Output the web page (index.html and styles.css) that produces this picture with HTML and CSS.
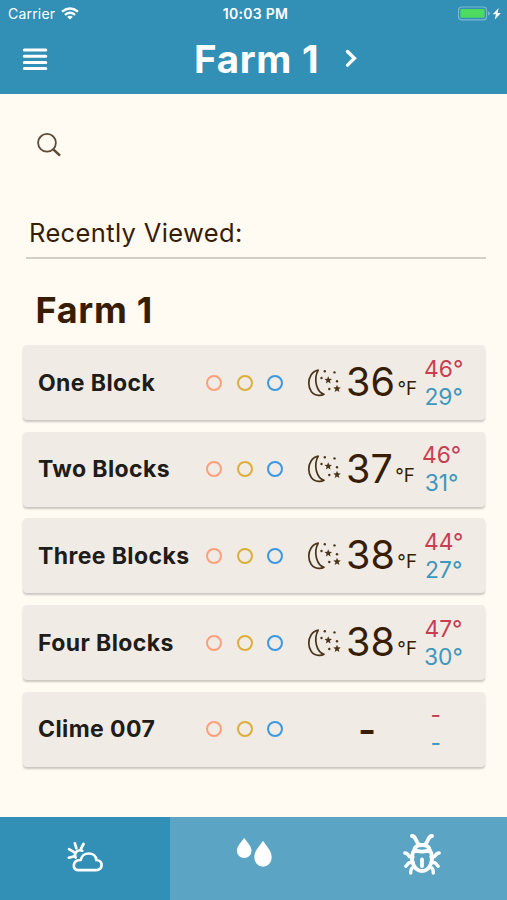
FILE: index.html
```html
<!DOCTYPE html>
<html lang="en">
<head>
<meta charset="utf-8">
<title>Farm 1</title>
<link rel="stylesheet" href="styles.css">
</head>
<body>
<svg class="defs" aria-hidden="true">
  <symbol id="night" viewBox="0 0 34 28">
    <path d="M11.200 1.200C-1.500 3.500-1.300 25.600 11.500 26.300c2.400.2 4.200-.3 5.500-1.100C9.800 23.200 6 10.500 11.200 1.200z" fill="none" stroke="#4a351b" stroke-width="1.700" stroke-linejoin="round"/>
    <g fill="#4a351b">
      <circle cx="17.800" cy="2.200" r="1.200"/><circle cx="27.500" cy="3.400" r="1.200"/><circle cx="14.500" cy="9" r="1.200"/><circle cx="30" cy="12.300" r="1.200"/><circle cx="22.300" cy="20" r="1.200"/>
      <path d="M21.200 7.200l1.100 2.600 2.700.2-2.100 1.800.7 2.700-2.400-1.500-2.300 1.500.7-2.700-2.100-1.800 2.700-.2z"/>
      <path d="M30 15.700l1.100 2.600 2.700.2-2.100 1.800.7 2.700-2.400-1.500-2.300 1.500.7-2.700-2.100-1.800 2.700-.2z"/>
    </g>
  </symbol>
</svg>
<header class="top">
  <div class="status">
    <div class="carrier">Carrier
      <svg width="18" height="13" viewBox="0 0 18 13" fill="none" stroke="#fff" stroke-width="2.300"><path d="M1 4.700q8-6.400 16 0M3.900 7.800q5.100-4 10.200 0"/><path d="M9 12.600L6.200 9.900q2.800-2.200 5.600 0z" fill="#fff" stroke="none"/></svg>
    </div>
    <div class="clock">10:03 PM</div>
    <svg class="battery" width="44" height="16" viewBox="0 0 44 16"><rect x="0.500" y="1" width="28" height="12.800" rx="3" fill="none" stroke="#7fb8d2" stroke-width="1.200"/><rect x="2.400" y="3" width="24.200" height="8.800" rx="1" fill="#4fdb60"/><path d="M30 5.500v4q2-.5 2-2t-2-2z" fill="#7fb8d2"/><path d="M40.700 2l-6 6.200h3.200l-1 5.200 6-6.500h-3.300z" fill="#fff"/></svg>
  </div>
  <div class="bar">
    <svg class="menu" width="26" height="24" viewBox="0 0 26 24" stroke="#fff" stroke-width="3" stroke-linecap="round"><path d="M2.300 3h21.500M2.300 9.200h21.500M2.300 15.400h21.500M2.300 21.500h21.500"/></svg>
    <h1>Farm 1</h1>
    <svg class="next" width="14" height="20" viewBox="0 0 14 20" fill="none" stroke="#fff" stroke-width="3.400" stroke-linecap="round" stroke-linejoin="miter"><path d="M3.500 2.500l6.900 6.800-6.900 6.800"/></svg>
  </div>
</header>
<main>
  <svg class="search" width="26" height="26" viewBox="0 0 26 26" fill="none" stroke="#5f4b35"><circle cx="11" cy="10.800" r="8.900" stroke-width="1.800"/><path d="M17.300 17.300l6.700 6.400" stroke-width="2.500"/></svg>
  <div class="recent">Recently Viewed:</div>
  <h2>Farm 1</h2>
  <section class="cards">
    <article class="card"><b class="name">One Block</b><div class="rings"><i></i><i></i><i></i></div><svg class="night"><use href="#night"/></svg><div class="reading"><div class="temp">36<small>°F</small></div><div class="range"><span>46°</span><span>29°</span></div></div></article>
    <article class="card"><b class="name">Two Blocks</b><div class="rings"><i></i><i></i><i></i></div><svg class="night"><use href="#night"/></svg><div class="reading"><div class="temp">37<small>°F</small></div><div class="range"><span>46°</span><span>31°</span></div></div></article>
    <article class="card"><b class="name">Three Blocks</b><div class="rings"><i></i><i></i><i></i></div><svg class="night"><use href="#night"/></svg><div class="reading"><div class="temp">38<small>°F</small></div><div class="range"><span>44°</span><span>27°</span></div></div></article>
    <article class="card"><b class="name">Four Blocks</b><div class="rings"><i></i><i></i><i></i></div><svg class="night"><use href="#night"/></svg><div class="reading"><div class="temp">38<small>°F</small></div><div class="range"><span>47°</span><span>30°</span></div></div></article>
    <article class="card"><b class="name">Clime 007</b><div class="rings"><i></i><i></i><i></i></div><div class="reading empty"><div class="temp">-</div><div class="range"><span>-</span><span>-</span></div></div></article>
  </section>
</main>
<nav>
  <div class="tab active"><svg width="38" height="32" viewBox="0 0 38 32" fill="none" stroke="#fff" stroke-width="2.700" stroke-linecap="round" stroke-linejoin="round"><path d="M12 29.200H30c7.500-.3 7.300-9.800.4-10.200C29.500 10.300 16.300 10.300 14.700 19c-8.200-.3-9 9.800-2.700 10.200zM9.600 16.500C7.500 12 11.500 8 16.200 9.700M8.900 2.400l1.400 4.800M17.500 3l-2.400 4.500M3 8.200l4.500 2.600M2.800 16.700l4.700-1.200"/></svg></div>
  <div class="tab"><svg class="drops" width="36" height="32" viewBox="0 0 36 32" fill="#fff"><path d="M8.200.8c2 3.600 7.300 8 7.300 13a7.300 7.300 0 0 1-14.600 0C.9 8.800 6.200 4.400 8.200.8zM27 3.800c2.700 4.700 8.700 9.700 8.700 16.400a8.700 9.500 0 0 1-17.400 0c0-6.700 6-11.700 8.700-16.400z"/></svg></div>
  <div class="tab"><svg class="bug" width="42" height="42" viewBox="0 0 42 42" fill="none" stroke="#fff" stroke-width="3.800" stroke-linecap="round"><path d="M11 3c4-.3 3.300 5.500 7 8.500M31 3c-4-.3-3.300 5.500-7 8.500M13.500 16.500C13.500 10.500 28.500 10.500 28.500 16.500C25 19.300 17 19.300 13.500 16.500C8.500 24 11.500 38 21 38S33.500 24 28.500 16.500M21 26.500v6.500"/><path d="M12 24H9.500c-2 0-1.800-4-5.700-4M12 29.500H9c-2.400 0-2 2.500-4.200 3.700M13.500 34c-3.300.5-3.800 2.500-3.800 6M30 24h2.500c2 0 1.800-4 5.700-4M30 29.500h3c2.400 0 2 2.500 4.200 3.700M28.500 34c3.300.5 3.800 2.500 3.800 6" stroke-width="3.400"/></svg></div>
</nav>
</body>
</html>
```
FILE: styles.css
```css
* { box-sizing: border-box; }
body {
  margin: 0;
  width: 507px;
  height: 900px;
  display: flex;
  flex-direction: column;
  overflow: hidden;
  background: #fffaf2;
  color: #371d04;
  font-family: Inter, "Liberation Sans", sans-serif;
}
svg { display: block; flex: none; }
.defs { position: absolute; width: 0; height: 0; }
.top { height: 94px; flex: none; background: #328fb5; color: #fff; }
.status {
  height: 27px;
  padding: 0 5px 0 8px;
  display: grid;
  grid-template-columns: 1fr auto 1fr;
  align-items: center;
  font-size: 14px;
  line-height: 27px;
}
.carrier { display: flex; align-items: center; gap: 6px; letter-spacing: .2px; }
.clock { font-weight: 600; letter-spacing: .3px; padding-left: 1px; }
.battery { justify-self: end; }
.bar { display: flex; align-items: center; height: 64px; padding-left: 22px; }
h1 { margin: 0 0 0 146px; width: 128px; font-size: 38.500px; line-height: 46px; letter-spacing: .7px; white-space: nowrap; }
.next { margin-left: 22px; }
main { flex: 1; padding: 38px 21px 0 23px; }
.search { margin-left: 13px; }
.recent {
  margin: 56px 0 0 3px;
  height: 45px;
  padding-left: 3px;
  border-bottom: 2px solid #d4cec6;
  font-size: 25.500px;
  line-height: 37px;
  letter-spacing: .36px;
}
h2 { margin: 30px 0 0 12.500px; font-size: 36px; line-height: 42px; letter-spacing: .7px; }
.cards { margin-top: 14px; display: flex; flex-direction: column; gap: 11.700px; width: 462px; }
.card {
  height: 75px;
  padding-left: 15px;
  display: grid;
  grid-template-columns: 168px 77px 24px 34px 1fr;
  align-items: center;
  background: #f0ebe4;
  border-radius: 4px;
  box-shadow: 0 2px 2px #cdc7c1;
}
.name { color: #201c19; font-size: 23px; font-weight: 650; letter-spacing: .4px; white-space: nowrap; }
.rings { display: flex; justify-content: space-between; }
.rings i { width: 16px; height: 16px; border: 2px solid #ff9f7b; border-radius: 50%; }
.rings i:nth-child(2) { border-color: #dcae3a; }
.rings i:nth-child(3) { border-color: #3a99e2; }
.night { grid-column: 4; width: 34px; height: 28px; }
.reading { grid-column: 5; display: flex; align-items: center; padding-left: 5px; }
.temp { padding-top: 7px; font-size: 39.500px; line-height: 48px; white-space: nowrap; }
.temp small { position: relative; top: -1px; font-size: 18.800px; margin-left: 2.500px; }
.range { margin-left: 7px; display: flex; flex-direction: column; align-items: center; font-size: 22.800px; line-height: 28px; color: #c83e52; }
.range span + span { color: #3d97bf; }
.empty .temp { width: 69px; padding: 2px 0 0 12px; font-size: 39px; font-weight: 600; }
.empty .range { margin-left: 15.500px; }
nav { height: 83px; flex: none; display: grid; grid-template-columns: 170px 1fr 1fr; background: #5ba4c3; }
.tab { display: flex; justify-content: center; align-items: center; padding-bottom: 4px; }
.drops { margin: 0 0 8px; }
.bug { margin: 0 2px 5px 0; }
.active { background: #328fb5; }
```
